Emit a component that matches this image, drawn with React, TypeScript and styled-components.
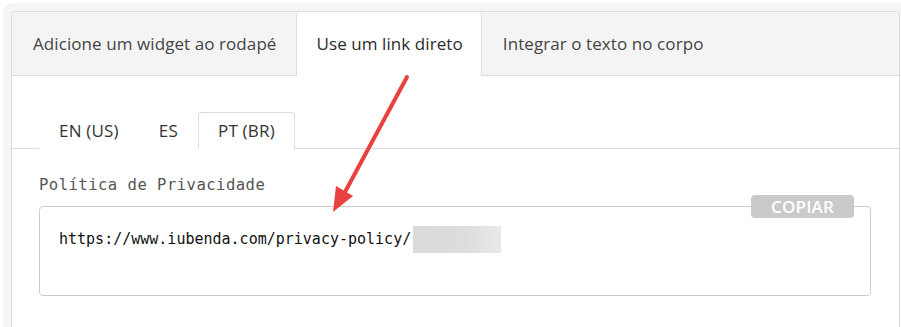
import React, { useState } from 'react'
import styled, { createGlobalStyle } from 'styled-components'

const GlobalStyle = createGlobalStyle`
  html, body {
    margin: 0;
    padding: 0;
    background: #ffffff;
    overflow: hidden;
  }
  body {
    font-family: "Open Sans", "Noto Sans", sans-serif;
  }
`

const Frame = styled.div`
  position: relative;
  margin: 3px 0 0 3px;
  height: 340px;
  background: #f5f5f5;
  border-radius: 10px 0 0 0;
  padding: 8px 0 0 8px;
  box-sizing: border-box;
`

const Panel = styled.div`
  background: #ffffff;
  border: 1px solid #dddddd;
  border-radius: 3px 3px 0 0;
  margin-right: 1px;
  height: 100%;
  box-sizing: border-box;
  overflow: hidden;
`

const TabBar = styled.div`
  display: flex;
  height: 64px;
  background: #f4f4f4;
  border-bottom: 1px solid #dddddd;
  box-sizing: border-box;
`

const Tab = styled.button<{ $active?: boolean }>`
  display: flex;
  align-items: center;
  height: 64px;
  padding: 0 18px 2px 20px;
  border: none;
  border-left: 1px solid ${p => (p.$active ? '#dddddd' : 'transparent')};
  border-right: 1px solid ${p => (p.$active ? '#dddddd' : 'transparent')};
  border-radius: 4px 4px 0 0;
  background: ${p => (p.$active ? '#ffffff' : 'transparent')};
  color: ${p => (p.$active ? '#2b2b2b' : '#444444')};
  font-family: "Open Sans", "Noto Sans", sans-serif;
  font-size: 17px;
  letter-spacing: 0.08px;
  cursor: pointer;
  white-space: nowrap;
`

const Body = styled.div`
  padding: 36px 0 0 0;
`

const LangBar = styled.div`
  display: flex;
  height: 37px;
  padding-left: 27px;
  border-bottom: 1px solid #dddddd;
  box-sizing: border-box;
`

const LangTab = styled.button<{ $active?: boolean }>`
  display: flex;
  align-items: center;
  height: 37px;
  padding: 0 19px 2px 19px;
  border: 1px solid ${p => (p.$active ? '#dddddd' : 'transparent')};
  border-bottom: none;
  border-radius: 4px 4px 0 0;
  background: #ffffff;
  color: #333333;
  font-family: "Open Sans", "Noto Sans", sans-serif;
  font-size: 17px;
  letter-spacing: 0.2px;
  cursor: pointer;
  white-space: nowrap;
`

const Section = styled.div`
  padding: 26px 28px 0 27px;
`

const Label = styled.div`
  font-family: "DejaVu Sans Mono", "Liberation Mono", monospace;
  font-size: 15.6px;
  letter-spacing: 0.45px;
  color: #555555;
  line-height: 20px;
  margin-bottom: 11px;
`

const Field = styled.div`
  position: relative;
  height: 90px;
  border: 1px solid #cccccc;
  border-radius: 4px;
  padding: 19px 19px;
  box-sizing: border-box;
  display: flex;
  align-items: flex-start;
`

const Url = styled.span`
  font-family: "DejaVu Sans Mono", "Liberation Mono", monospace;
  font-size: 15px;
  color: #111111;
  line-height: 27px;
`

const Redacted = styled.span`
  display: inline-block;
  width: 88px;
  height: 27px;
  margin-left: 2px;
  background: linear-gradient(90deg, #dadada 0%, #dddddd 60%, #e8e9e8 100%);
`

const CopyButton = styled.button`
  position: absolute;
  top: -12px;
  right: 16px;
  width: 103px;
  height: 23px;
  border: none;
  border-radius: 4px;
  background: #cacaca;
  color: #ffffff;
  font-family: "Open Sans", "Noto Sans", sans-serif;
  font-size: 17px;
  font-weight: 600;
  letter-spacing: 0.2px;
  line-height: 23px;
  padding: 0;
  cursor: pointer;
`

const Arrow = styled.svg`
  position: absolute;
  left: -3px;
  top: -3px;
  pointer-events: none;
`

const tabs = ['Adicione um widget ao rodapé', 'Use um link direto', 'Integrar o texto no corpo']
const langs = ['EN (US)', 'ES', 'PT (BR)']

export default function App() {
  const [tab, setTab] = useState(1)
  const [lang, setLang] = useState(2)

  return (
    <>
      <GlobalStyle />
      <Frame>
        <Panel>
          <TabBar>
            {tabs.map((t, i) => (
              <Tab key={t} $active={i === tab} onClick={() => setTab(i)}>
                {t}
              </Tab>
            ))}
          </TabBar>
          <Body>
            <LangBar>
              {langs.map((l, i) => (
                <LangTab key={l} $active={i === lang} onClick={() => setLang(i)}>
                  {l}
                </LangTab>
              ))}
            </LangBar>
            <Section>
              <Label>Política de Privacidade</Label>
              <Field>
                <Url>https://www.iubenda.com/privacy-policy/</Url>
                <Redacted />
                <CopyButton>COPIAR</CopyButton>
              </Field>
            </Section>
          </Body>
        </Panel>
        <Arrow width="901" height="327" viewBox="0 0 901 327">
          <line x1="407" y1="77" x2="345" y2="192" stroke="#e8413f" strokeWidth="4" strokeLinecap="round" />
          <polygon points="333,212 336,186 353,196" fill="#e8413f" />
        </Arrow>
      </Frame>
    </>
  )
}
